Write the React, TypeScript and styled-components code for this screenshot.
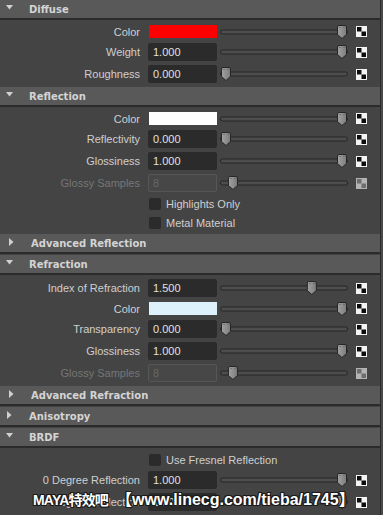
import styled, { createGlobalStyle } from "styled-components";

const GlobalStyle = createGlobalStyle`
  html, body {
    margin: 0;
    padding: 0;
    background: #4a4a4a;
  }
  body {
    font-family: "Liberation Sans", Arial, sans-serif;
  }
`;

const Panel = styled.div`
  position: relative;
  width: 380px;
  height: 515px;
  overflow: hidden;
  display: flex;
  flex-direction: column;
  background: #444444;
  border-right: 1px solid #2b2b2b;
`;

const Section = styled.section`
  display: flex;
  flex-direction: column;
  margin-bottom: 1px;
`;

const Header = styled.div<{ $indent: number }>`
  height: 18px;
  display: flex;
  align-items: center;
  background: #595959;
  border-bottom: 2px solid #2b2b2b;
  font-family: "DejaVu Sans", sans-serif;
  font-weight: bold;
  font-size: 10px;
  color: #d4d4d4;
  padding-left: ${(p) => p.$indent}px;
`;

const Arrow = styled.span`
  width: 23px;
  height: 18px;
  display: flex;
  align-items: center;
  margin-left: 6px;
  margin-top: -3px;
`;

const Body = styled.div`
  display: flex;
  flex-direction: column;
  padding: 2px 0 1px;
`;

const Row = styled.div<{ $h: number }>`
  display: flex;
  align-items: center;
  height: ${(p) => p.$h}px;
`;

const Label = styled.div<{ $disabled?: boolean }>`
  width: 140px;
  margin-right: 8px;
  text-align: right;
  white-space: nowrap;
  font-size: 11px;
  color: ${(p) => (p.$disabled ? "#767676" : "#cfcfcf")};
`;

const Field = styled.div<{ $disabled?: boolean }>`
  width: 69px;
  height: 18px;
  box-sizing: border-box;
  margin-right: 3px;
  padding-left: 4px;
  display: flex;
  align-items: center;
  border-radius: 2px;
  font-size: 11px;
  background: ${(p) => (p.$disabled ? "#474747" : "#2b2b2b")};
  border: 1px solid ${(p) => (p.$disabled ? "#565656" : "#2b2b2b")};
  color: ${(p) => (p.$disabled ? "#676767" : "#e0e0e0")};
`;

const Swatch = styled.div<{ $color: string }>`
  width: 68px;
  height: 13px;
  margin: 0 3px 0 1px;
  background: ${(p) => p.$color};
`;

const CheckRow = styled.div`
  display: flex;
  align-items: center;
  height: 19px;
  padding-left: 149px;
`;

const CheckBox = styled.span`
  width: 12px;
  height: 12px;
  margin-right: 5px;
  border-radius: 2px;
  background: #2b2b2b;
`;

const CheckLabel = styled.span`
  font-size: 11px;
  color: #cfcfcf;
`;

const SliderBox = styled.svg`
  width: 128px;
  height: 16px;
  margin-right: 8px;
  flex: none;
`;

const MapBox = styled.svg`
  width: 11px;
  height: 11px;
  flex: none;
`;

const Watermark = styled.div`
  position: absolute;
  left: 33px;
  top: 486px;
  display: flex;
  align-items: baseline;
  gap: 8px;
  white-space: nowrap;
  font-weight: bold;
  color: #ffffff;
  text-shadow: 1px 0 0 #1a1a1a, -1px 0 0 #1a1a1a, 0 1px 0 #1a1a1a, 0 -1px 0 #1a1a1a,
    1px 1px 0 #1a1a1a, -1px -1px 0 #1a1a1a, 1px -1px 0 #1a1a1a, -1px 1px 0 #1a1a1a;
`;

const MarkName = styled.span`
  font-family: "Liberation Sans", "Noto Sans CJK SC", sans-serif;
  font-size: 14px;
  letter-spacing: -0.8px;
`;

const MarkUrl = styled.span`
  font-family: "Liberation Sans", "Noto Sans CJK SC", sans-serif;
  font-size: 16px;
`;

type Item =
  | { kind: "color"; label: string; color: string; t: number }
  | { kind: "field"; label: string; value: string; t: number; disabled?: boolean }
  | { kind: "check"; label: string };

type SectionData = { title: string; open: boolean; sub?: boolean; items: Item[] };

const sections: SectionData[] = [
  {
    title: "Diffuse",
    open: true,
    items: [
      { kind: "color", label: "Color", color: "#ff0000", t: 1 },
      { kind: "field", label: "Weight", value: "1.000", t: 1 },
      { kind: "field", label: "Roughness", value: "0.000", t: 0 },
    ],
  },
  {
    title: "Reflection",
    open: true,
    items: [
      { kind: "color", label: "Color", color: "#ffffff", t: 1 },
      { kind: "field", label: "Reflectivity", value: "0.000", t: 0 },
      { kind: "field", label: "Glossiness", value: "1.000", t: 1 },
      { kind: "field", label: "Glossy Samples", value: "8", t: 0.06, disabled: true },
      { kind: "check", label: "Highlights Only" },
      { kind: "check", label: "Metal Material" },
    ],
  },
  { title: "Advanced Reflection", open: false, sub: true, items: [] },
  {
    title: "Refraction",
    open: true,
    items: [
      { kind: "field", label: "Index of Refraction", value: "1.500", t: 0.74 },
      { kind: "color", label: "Color", color: "#ddf1fc", t: 1 },
      { kind: "field", label: "Transparency", value: "0.000", t: 0 },
      { kind: "field", label: "Glossiness", value: "1.000", t: 1 },
      { kind: "field", label: "Glossy Samples", value: "8", t: 0.06, disabled: true },
    ],
  },
  { title: "Advanced Refraction", open: false, sub: true, items: [] },
  { title: "Anisotropy", open: false, items: [] },
  {
    title: "BRDF",
    open: true,
    items: [
      { kind: "check", label: "Use Fresnel Reflection" },
      { kind: "field", label: "0 Degree Reflection", value: "1.000", t: 1 },
      { kind: "field", label: "90 Degree Reflection", value: "1.000", t: 1 },
    ],
  },
];

function Triangle({ open }: { open: boolean }) {
  return open ? (
    <svg width="7" height="5" viewBox="0 0 7 5">
      <polygon points="0,0 7,0 3.5,4.5" fill="#d0d0d0" />
    </svg>
  ) : (
    <svg width="5" height="8" viewBox="0 0 5 8" style={{ marginLeft: 1 }}>
      <polygon points="0,0 4.5,4 0,8" fill="#d0d0d0" />
    </svg>
  );
}

function Slider({ t }: { t: number }) {
  const cx = 6 + t * 116;
  return (
    <SliderBox viewBox="0 0 128 16">
      <defs>
        <linearGradient id="thumb" x1="0" y1="0" x2="1" y2="0">
          <stop offset="0" stopColor="#a2a2a2" />
          <stop offset="1" stopColor="#7c7c7c" />
        </linearGradient>
      </defs>
      <rect x="0.5" y="6" width="127" height="4" rx="2" fill="#4d4d4d" stroke="#262626" />
      <path
        d={`M${cx - 4.5},3 Q${cx - 4.5},1.5 ${cx - 3},1.5 H${cx + 3} Q${cx + 4.5},1.5 ${cx + 4.5},3 V10.5 L${cx},14.5 L${cx - 4.5},10.5 Z`}
        fill="url(#thumb)"
        stroke="#262626"
      />
      <rect x={cx - 2.5} y="3" width="1" height="1" fill="#555" />
      <rect x={cx + 1.5} y="3" width="1" height="1" fill="#555" />
    </SliderBox>
  );
}

function MapButton({ disabled }: { disabled?: boolean }) {
  const light = disabled ? "#b4b4b4" : "#f4f4f4";
  const dark = disabled ? "#6e6e6e" : "#0c0c0c";
  return (
    <MapBox viewBox="0 0 11 11">
      <rect x="0" y="0" width="11" height="11" fill={light} />
      <rect x="1" y="1" width="4.5" height="4.5" fill={dark} />
      <rect x="5.5" y="5.5" width="4.5" height="4.5" fill={dark} />
    </MapBox>
  );
}

function Attribute({ item }: { item: Item }) {
  if (item.kind === "check") {
    return (
      <CheckRow>
        <CheckBox />
        <CheckLabel>{item.label}</CheckLabel>
      </CheckRow>
    );
  }
  if (item.kind === "color") {
    return (
      <Row $h={19}>
        <Label>{item.label}</Label>
        <Swatch $color={item.color} />
        <Slider t={item.t} />
        <MapButton />
      </Row>
    );
  }
  return (
    <Row $h={22}>
      <Label $disabled={item.disabled}>{item.label}</Label>
      <Field $disabled={item.disabled}>{item.value}</Field>
      <Slider t={item.t} />
      <MapButton disabled={item.disabled} />
    </Row>
  );
}

export default function App() {
  return (
    <>
      <GlobalStyle />
      <Panel>
        {sections.map((s) => (
          <Section key={s.title}>
            <Header $indent={s.sub ? 2 : 0}>
              <Arrow>
                <Triangle open={s.open} />
              </Arrow>
              {s.title}
            </Header>
            {s.open && (
              <Body>
                {s.items.map((it, i) => (
                  <Attribute key={i} item={it} />
                ))}
              </Body>
            )}
          </Section>
        ))}
        <Watermark>
          <MarkName>MAYA特效吧</MarkName>
          <MarkUrl>【www.linecg.com/tieba/1745】</MarkUrl>
        </Watermark>
      </Panel>
    </>
  );
}
